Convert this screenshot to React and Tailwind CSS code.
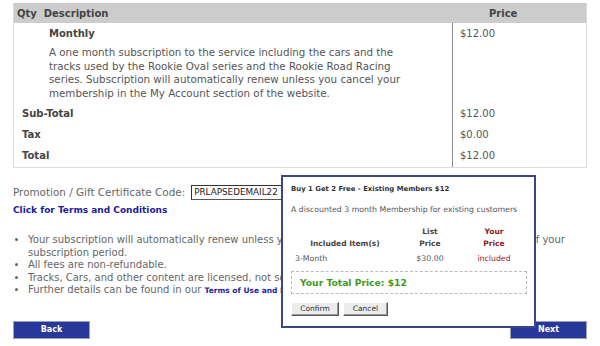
import React from "react";

export default function App() {
  return (
    <div className="relative w-[600px] h-[346px] overflow-hidden bg-white font-['DejaVu_Sans',sans-serif] text-[#555]">
      <div className="pt-[3px] pl-[13px]">
        {/* Cart table */}
        <div className="w-[574px] border-x border-b border-[#dcdcdc]">
          <div className="flex h-[20px] items-center bg-[#cccccc] text-[10px] font-bold text-[#444]">
            <div className="w-[475px] pl-[3px]">Qty&nbsp;&nbsp;Description</div>
            <div>Price</div>
          </div>
          <div className="grid grid-cols-[438px_136px] text-[10.3px] leading-[13.6px]">
            <div className="h-[80.5px] pl-[35px] pt-[4px]">
              <div className="font-bold text-[10px] text-[#444] leading-[14px]">Monthly</div>
              <div className="mt-[5px] w-[360px]">
                A one month subscription to the service including the cars and the
                tracks used by the Rookie Oval series and the Rookie Road Racing
                series. Subscription will automatically renew unless you cancel your
                membership in the My Account section of the website.
              </div>
            </div>
            <div className="border-l border-[#8c8c8c] pl-[7px] pt-[4px] text-[10px] leading-[14px]">$12.00</div>

            <div className="flex h-[21px] items-center pl-[8px] text-[10px] font-bold text-[#444]">Sub-Total</div>
            <div className="flex items-center border-l border-[#8c8c8c] pl-[7px] text-[10px]">$12.00</div>
            <div className="flex h-[21px] items-center pl-[8px] text-[10px] font-bold text-[#444]">Tax</div>
            <div className="flex items-center border-l border-[#8c8c8c] pl-[7px] text-[10px]">$0.00</div>
            <div className="flex h-[21px] items-center pl-[8px] text-[10px] font-bold text-[#444]">Total</div>
            <div className="flex items-center border-l border-[#8c8c8c] pl-[7px] text-[10px]">$12.00</div>
          </div>
        </div>

        {/* Promotion */}
        <div className="mt-[17px] flex items-center text-[10.4px]">
          <span className="text-[#666]">Promotion / Gift Certificate Code:</span>
          <span className="ml-[6px] flex h-[15px] w-[100px] items-center border border-[#555] border-t-[#333] border-l-[#333] bg-white pl-[2px] text-[8.8px] text-[#222]">
            PRLAPSEDEMAIL22
          </span>
        </div>
        <div className="mt-[4px] text-[9px] font-bold leading-[12px] text-[#1c1c9c]">
          Click for Terms and Conditions
        </div>

        {/* Bullets */}
        <ul className="mt-[18px] w-[556px] pl-[15px] text-[10px] leading-[12.6px] text-[#666] list-disc">
          <li>
            Your subscription will automatically renew unless{" "}
            <span className="[word-spacing:0.5px]">you cancel your subscription before the very end</span> of your
            subscription period.
          </li>
          <li>All fees are non-refundable.</li>
          <li>Tracks, Cars, and other content are licensed, not sold.</li>
          <li>
            Further details can be found in our{" "}
            <span className="text-[7.5px] font-bold text-[#1c1c9c]">Terms of Use and End User License Agreement</span>
          </li>
        </ul>

        {/* Nav buttons */}
        <div className="mt-[23px] flex w-[574px] justify-between">
          <div className="flex h-[18px] w-[77px] items-center justify-center border border-[#9aa0b8] bg-[#28389a] text-[8px] font-bold text-white">
            Back
          </div>
          <div className="flex h-[18px] w-[77px] items-center justify-center border border-[#9aa0b8] bg-[#28389a] text-[8px] font-bold text-white">
            Next
          </div>
        </div>
      </div>

      {/* Popup overlay */}
      <div className="absolute left-[281px] top-[175px] w-[255px] h-[153px] border-2 border-[#3a4785] bg-white px-[8px] pt-[7px] text-[8px] text-[#555]">
        <div className="font-bold text-[6.9px] text-[#333] leading-[10px]">Buy 1 Get 2 Free - Existing Members $12</div>
        <div className="mt-[11px] leading-[10px] text-[7.8px]">A discounted 3 month Membership for existing customers</div>
        <div className="mt-[10px] grid grid-cols-[108px_62px_66px] text-[7.5px] leading-[13px]">
          <div className="flex items-end justify-center font-bold text-[#444]">Included Item(s)</div>
          <div className="flex flex-col items-center font-bold text-[#444]"><span>List</span><span className="-mt-px">Price</span></div>
          <div className="flex flex-col items-center font-bold text-[#8b1a1a]"><span>Your</span><span className="-mt-px">Price</span></div>
          <div className="pl-[4px] pt-[2px] text-[7.8px]">3-Month</div>
          <div className="text-center pt-[2px] text-[7.8px]">$30.00</div>
          <div className="text-center pt-[2px] text-[7.8px] text-[#9b2020]">included</div>
        </div>
        <div className="mt-[6px] flex h-[23px] w-[236px] items-center border border-dashed border-[#bbbbbb] pl-[8px] text-[9.2px] font-bold text-[#3d9a1c]">
          Your Total Price: $12
        </div>
        <div className="mt-[8px] flex gap-[4px]">
          <div className="flex h-[14px] w-[48px] items-center justify-center border border-[#fff] border-r-[#555] border-b-[#555] bg-[#ececec] text-[7.5px] text-[#333] shadow-[inset_-1px_-1px_0_#999]">
            Confirm
          </div>
          <div className="flex h-[14px] w-[45px] items-center justify-center border border-[#fff] border-r-[#555] border-b-[#555] bg-[#ececec] text-[7.5px] text-[#333] shadow-[inset_-1px_-1px_0_#999]">
            Cancel
          </div>
        </div>
      </div>
    </div>
  );
}
